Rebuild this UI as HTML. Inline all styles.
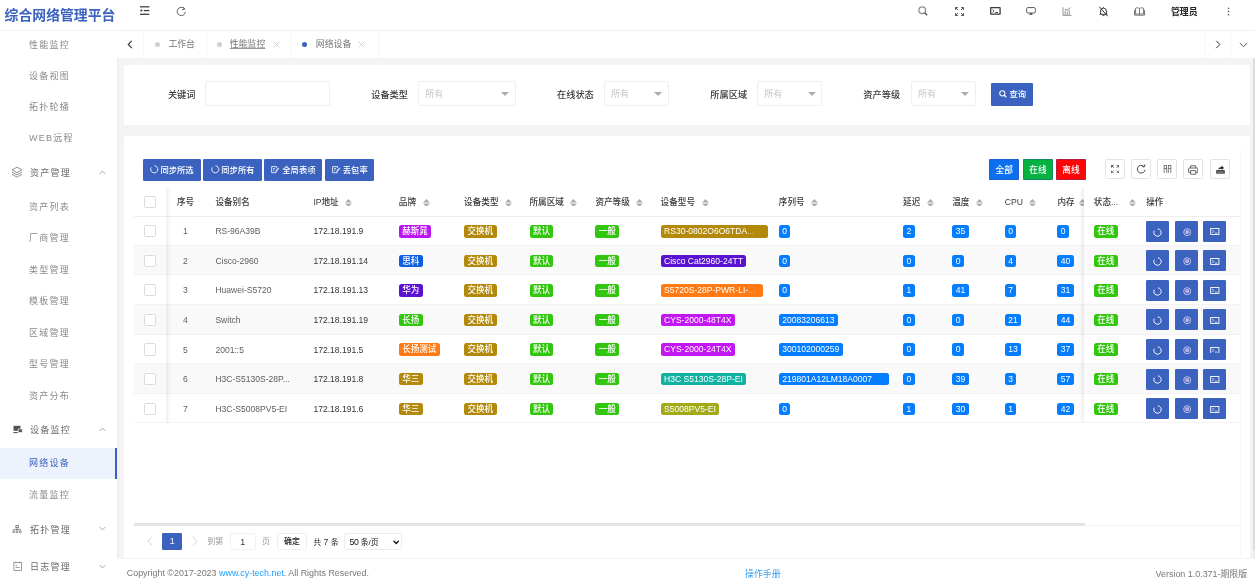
<!DOCTYPE html><html lang="zh-CN"><head><meta charset="utf-8"><title>综合网络管理平台</title><style>
*{box-sizing:border-box;margin:0;padding:0}
body{filter:blur(.45px)}
html,body{width:1255px;height:586px;overflow:hidden;background:#f4f4f4;font-family:"Liberation Sans","Noto Sans CJK SC",sans-serif;color:#333}
.abs{position:absolute}
#side{position:absolute;left:0;top:0;width:117.2px;height:586px;background:#fff;box-shadow:1px 0 2.5px rgba(0,0,0,.035)}
#logo{position:absolute;left:0;top:0;width:117.2px;height:30.7px;border-bottom:1px solid #f3f3f3;color:#3a62be;font-weight:bold;font-size:13.85px;line-height:30px;padding-left:4.6px;white-space:nowrap;letter-spacing:0}
.mi{position:absolute;left:0;width:117.2px;height:31px;line-height:31px;font-size:9px;letter-spacing:1.25px;color:#8a8a8a;padding-left:28.9px;white-space:nowrap}
.mi.g{padding-left:29.9px;color:#6a6a6a}
.mi.g span{position:relative}
.mi.act{background:#ecf3fd;color:#3a62be;border-right:2.4px solid #3a62be}
.mi svg{position:absolute}
#head{position:absolute;left:117.2px;top:0;width:1137.8px;height:30.8px;background:#fff;border-bottom:1px solid #f1f1f1}
#tabs{position:absolute;left:117.2px;top:30.5px;width:1137.8px;height:27.3px;background:#fff}
.sep{position:absolute;top:0;width:1px;height:27.3px;background:#f5f5f5}
.tab{position:absolute;top:0;height:27.3px;line-height:27.3px;font-size:8.9px;color:#777;white-space:nowrap}
.dot{position:absolute;top:11.2px;width:5px;height:5px;border-radius:50%;background:#d0d0d0}
.card{position:absolute;background:#fff;border-radius:1.5px}
.lab{position:absolute;top:0;height:24px;line-height:24px;font-size:9.2px;font-weight:500;color:#383838;text-align:right;white-space:nowrap}
.inp{position:absolute;height:24.6px;border:1px solid #efefef;border-radius:2px;background:#fff;font-size:9px;line-height:24.4px;color:#c6c6c6;padding-left:6.3px}
.inp i{position:absolute;right:5.6px;top:10px;width:0;height:0;border-left:4px solid transparent;border-right:4px solid transparent;border-top:4.2px solid #adadad}
.btn{position:absolute;background:#3a62be;color:#fff;font-size:8.3px;font-weight:500;white-space:nowrap;text-align:center;border-radius:1.3px}
.fb{top:158.9px;height:21.2px;line-height:22px;font-size:8.7px;box-shadow:inset 0 0 0 .7px rgba(58,70,170,.5)}
.th{position:absolute;font-size:8.6px;font-weight:500;color:#3a3a3a;white-space:nowrap;line-height:12px}
.row{position:absolute;left:133.6px;width:1106.4px;height:29.59px;border-bottom:1px solid #f2f2f2}
.row.z{background:#f9f9f9}
.td{position:absolute;font-size:8.55px;color:#5e5e5e;white-space:nowrap;line-height:12px}
.bd{position:absolute;height:12.6px;line-height:12.6px;border-radius:2.5px;color:#fff;font-size:8.55px;font-weight:500;padding:0 3.45px;white-space:nowrap;overflow:hidden}
.bd i{font-style:normal;opacity:.5}
.cb{position:absolute;left:143.5px;width:12.2px;height:12.2px;border:1px solid #dcdcdc;border-radius:1.6px;background:#fff}
.ab{position:absolute;width:23px;height:21px;background:#3a62be;border-radius:1.3px}
.tool{position:absolute;top:159.2px;width:19.5px;height:19.5px;border:1px solid #e4e4e4;border-radius:1.5px;background:#fff}
.pg{position:absolute;font-size:8px;white-space:nowrap}
#foot{position:absolute;left:117.2px;top:559.3px;width:1137.8px;height:26.7px;background:#fff;font-size:8.92px;color:#777}
#foot span{position:absolute;top:0;line-height:28.5px;white-space:nowrap}
</style></head><body>
<div id="side"><div id="logo">综合网络管理平台</div>
<div class="mi" style="top:29.8px">性能监控</div>
<div class="mi" style="top:60.8px">设备视图</div>
<div class="mi" style="top:91.8px">拓扑轮播</div>
<div class="mi" style="top:122.8px">WEB远程</div>
<div class="mi g" style="top:156.9px"><svg style="left:11.4px;top:9.3px" width="12" height="12" viewBox="0 0 12 12" fill="none" stroke="#888" stroke-width="0.9" stroke-linejoin="round"><path d="M6 1.2 L11 3.9 L6 6.6 L1 3.9 Z"/><path d="M1 6.2 L6 8.9 L11 6.2"/><path d="M1 8.4 L6 11.1 L11 8.4"/></svg><svg style="left:98.6px;top:13px" width="7" height="5" viewBox="0 0 7 5" fill="none" stroke="#999" stroke-width="0.85"><path d="M0.7 4 L3.5 1.1 L6.3 4"/></svg><span style="top:1.2px">资产管理</span></div>
<div class="mi" style="top:191.8px">资产列表</div>
<div class="mi" style="top:222.8px">厂商管理</div>
<div class="mi" style="top:254.8px">类型管理</div>
<div class="mi" style="top:285.8px">模板管理</div>
<div class="mi" style="top:317.8px">区域管理</div>
<div class="mi" style="top:348.8px">型号管理</div>
<div class="mi" style="top:380.8px">资产分布</div>
<div class="mi g" style="top:414.2px"><svg style="left:12.6px;top:10.7px" width="10" height="10" viewBox="0 0 10 10"><rect x="0.5" y="0.8" width="7" height="5" fill="#555"/><rect x="5.2" y="4" width="4" height="3.4" fill="#555" stroke="#fff" stroke-width=".6"/><rect x="0.5" y="7" width="4.2" height="1.1" fill="#555"/></svg><svg style="left:98.6px;top:13px" width="7" height="5" viewBox="0 0 7 5" fill="none" stroke="#999" stroke-width="0.85"><path d="M0.7 4 L3.5 1.1 L6.3 4"/></svg><span style="top:0.5px">设备监控</span></div>
<div class="mi act" style="top:447.7px">网络设备</div>
<div class="mi" style="top:479.8px">流量监控</div>
<div class="mi g" style="top:514.1px"><svg style="left:12.2px;top:11.2px" width="10.2" height="8.8" viewBox="0 0 11 10" fill="none" stroke="#666" stroke-width="0.85"><rect x="4.1" y="0.6" width="2.8" height="2.4"/><path d="M5.5 3 V5 M1.7 6.4 V5 H9.3 V6.4 M5.5 5 V6.4"/><circle cx="1.7" cy="7.7" r="1.15"/><circle cx="5.5" cy="7.7" r="1.15"/><circle cx="9.3" cy="7.7" r="1.15"/></svg><svg style="left:98.6px;top:12.4px" width="7" height="5" viewBox="0 0 7 5" fill="none" stroke="#999" stroke-width="0.85"><path d="M0.7 1 L3.5 3.9 L6.3 1"/></svg><span style="top:1.2px">拓扑管理</span></div>
<div class="mi g" style="top:550.9px"><svg style="left:12.8px;top:9.8px" width="10" height="10" viewBox="0 0 10 10" fill="none" stroke="#8e8e8e" stroke-width="0.85"><rect x="0.9" y="1.4" width="7.6" height="8"/><path d="M3 0.5 V2.4 M6.4 0.5 V2.4 M2.6 6.5 H6.8 M2.6 4.5 H4"/></svg><svg style="left:98.6px;top:13.0px" width="7" height="5" viewBox="0 0 7 5" fill="none" stroke="#999" stroke-width="0.85"><path d="M0.7 1 L3.5 3.9 L6.3 1"/></svg><span style="top:1.2px">日志管理</span></div>
</div>
<div id="head">
<svg class="abs" style="left:23px;top:6.1px" width="9.6" height="9.2" viewBox="0 0 10 9.6" fill="#3a3a3a"><rect x="0" y="0.2" width="9.8" height="1.3"/><rect x="4" y="4.1" width="5.8" height="1.3"/><rect x="0" y="8" width="9.8" height="1.3"/><path d="M0.6 3.2 L3 4.75 L0.6 6.3 Z"/></svg>
<svg class="abs" style="left:59px;top:6.2px" width="10.6" height="10.6" viewBox="0 0 10 10" fill="none" stroke="#555" stroke-width="0.9"><path d="M8.2 2.9 A3.9 3.9 0 1 0 8.9 5.6"/><path d="M6.3 0.9 L8.4 3 L5.7 3.5" stroke-width=".8"/></svg>
<svg class="abs" style="left:801.3px;top:6.4px" width="10" height="10" viewBox="0 0 10 10" fill="none" stroke="#8c8c8c" stroke-width="1.25"><circle cx="4.2" cy="4.2" r="3.3"/><path d="M6.7 6.7 L9.2 9.2" stroke="#555" stroke-width="1.4"/></svg>
<svg class="abs" style="left:837.6px;top:6.6px" width="9" height="9" viewBox="0 0 9 9" fill="none" stroke="#555" stroke-width="1"><path d="M0.5 2.8 V0.5 H2.8 M6.2 0.5 H8.5 V2.8 M8.5 6.2 V8.5 H6.2 M2.8 8.5 H0.5 V6.2 M0.7 0.7 L3 3 M8.3 0.7 L6 3 M8.3 8.3 L6 6 M0.7 8.3 L3 6"/></svg>
<svg class="abs" style="left:872.7px;top:7.2px" width="11" height="8" viewBox="0 0 11 8" fill="none" stroke="#3a3a3a" stroke-width="1.25"><rect x="0.7" y="0.7" width="9.4" height="6.4" rx=".15"/><path d="M2.5 2.4 L4.1 3.9 L2.5 5.4 M5.2 5.5 H8" stroke-width=".9"/></svg>
<svg class="abs" style="left:908.8px;top:7px" width="10.2" height="8.4" viewBox="0 0 11 9" fill="none" stroke="#555" stroke-width="1.05"><rect x="0.7" y="0.6" width="9.4" height="5.8" rx="1.2"/><path d="M3.6 8.4 H7.2 M4.4 8.2 L5.4 6.6 L6.4 8.2 Z" stroke-width="1" fill="#555"/></svg>
<svg class="abs" style="left:945.0px;top:7px" width="10" height="9" viewBox="0 0 10 9" fill="none" stroke="#888" stroke-width="0.9"><path d="M1 0.3 V8.4 H9.4 M3.2 8 V3.6 M5.2 8 V4.6 M7.2 8 V2.8 M2.8 2.2 L5 3.2 L8.4 0.6"/></svg>
<svg class="abs" style="left:980.7px;top:6px" width="11" height="11" viewBox="0 0 11 11" fill="none" stroke="#333" stroke-width="0.95"><path d="M2.6 8.2 V5 A2.9 2.9 0 0 1 8.4 5 V8.2 M1.6 8.3 H9.4 M4.5 9.6 H6.5 M5.5 1.2 V2.1"/><path d="M1.4 0.8 L9.6 10.2" stroke-width="1"/></svg>
<svg class="abs" style="left:1016.5px;top:7.2px" width="11" height="9" viewBox="0 0 11 9" fill="none" stroke="#666" stroke-width="0.9"><path d="M5.5 1.6 C4.4 0.6 2.6 0.6 1.6 1.2 V7.2 C2.8 6.7 4.4 6.8 5.5 7.6 C6.6 6.8 8.2 6.7 9.4 7.2 V1.2 C8.4 0.6 6.6 0.6 5.5 1.6 V7.6 M0.5 3 V8.2 H10.5 V3"/></svg>
<div class="abs" style="left:1053.8px;top:0;line-height:24.4px;font-size:8.9px;color:#222;font-weight:bold;white-space:nowrap;letter-spacing:0">管理员</div>
<svg class="abs" style="left:1110.3px;top:7px" width="3" height="9" viewBox="0 0 3 9" fill="#555"><circle cx="1.5" cy="1.2" r=".8"/><circle cx="1.5" cy="4.5" r=".8"/><circle cx="1.5" cy="7.8" r=".8"/></svg>
</div>
<div id="tabs">
<div class="sep" style="left:25.8px"></div>
<div class="sep" style="left:88.8px"></div>
<div class="sep" style="left:174.2px"></div>
<div class="sep" style="left:260.8px"></div>
<div class="sep" style="left:1087.0px"></div>
<div class="sep" style="left:1113.0px"></div>
<svg class="abs" style="left:9.8px;top:9.5px" width="6" height="9" viewBox="0 0 6 9" fill="none" stroke="#333" stroke-width="1.1"><path d="M4.8 0.8 L1.2 4.5 L4.8 8.2"/></svg>
<div class="dot" style="left:37.9px"></div><div class="tab" style="left:51.2px">工作台</div>
<div class="dot" style="left:99.4px"></div><div class="tab" style="left:112.6px;text-decoration:underline;text-decoration-color:#999;text-decoration-thickness:.6px;text-underline-offset:1px">性能监控</div>
<svg class="abs" style="left:155.7px;top:10.7px" width="7" height="7" viewBox="0 0 7 7" stroke="#c8c8c8" stroke-width=".8"><path d="M0.6 0.6 L6.4 6.4 M6.4 0.6 L0.6 6.4"/></svg>
<div class="dot" style="left:185.2px;background:#3a62be"></div><div class="tab" style="left:198.6px">网络设备</div>
<svg class="abs" style="left:241.3px;top:10.7px" width="7" height="7" viewBox="0 0 7 7" stroke="#c8c8c8" stroke-width=".8"><path d="M0.6 0.6 L6.4 6.4 M6.4 0.6 L0.6 6.4"/></svg>
<svg class="abs" style="left:1097.6px;top:9.8px" width="6" height="9" viewBox="0 0 6 9" fill="none" stroke="#333" stroke-width="1"><path d="M1.2 0.8 L4.8 4.5 L1.2 8.2"/></svg>
<svg class="abs" style="left:1122.0px;top:11.6px" width="9" height="6" viewBox="0 0 9 6" fill="none" stroke="#444" stroke-width=".9"><path d="M0.8 1 L4.5 4.6 L8.2 1"/></svg>
</div>
<div class="abs" style="left:1252.6px;top:57.8px;width:2.4px;height:501.5px;background:#ebebeb"></div>
<div class="abs" style="left:1252.6px;top:57.8px;width:2.4px;height:492.6px;background:#dddddd"></div>
<div class="card" style="left:123.6px;top:65px;width:1126.4px;height:60.2px">
<div class="lab" style="left:-8.1px;width:80px;top:17.5px">关键词</div>
<div class="inp" style="left:81.8px;top:16.2px;width:124.3px"></div>
<div class="lab" style="left:204.4px;width:80px;top:17.5px">设备类型</div>
<div class="inp" style="left:294.3px;top:16.2px;width:97.7px">所有<i></i></div>
<div class="lab" style="left:390.2px;width:80px;top:17.5px">在线状态</div>
<div class="inp" style="left:480.1px;top:16.2px;width:65.3px">所有<i></i></div>
<div class="lab" style="left:543.5px;width:80px;top:17.5px">所属区域</div>
<div class="inp" style="left:633.4px;top:16.2px;width:65.3px">所有<i></i></div>
<div class="lab" style="left:696.5px;width:80px;top:17.5px">资产等级</div>
<div class="inp" style="left:787.1px;top:16.2px;width:65.0px">所有<i></i></div>
<div class="btn" style="left:867.2px;top:18.0px;width:42.2px;height:22.9px;line-height:22.6px;text-align:left"><svg class="abs" style="left:8.3px;top:7.4px" width="8" height="8" viewBox="0 0 8 8" fill="none" stroke="#fff" stroke-width="1.05"><circle cx="3.3" cy="3.3" r="2.6"/><path d="M5.3 5.3 L7.4 7.4" stroke-width="1.25"/></svg><span style="position:absolute;left:18.6px">查询</span></div>
</div>
<div class="card" style="left:123.6px;top:136px;width:1126.4px;height:423.4px"></div>
<div class="btn" style="left:142.8px;top:158.6px;width:58.0px;height:22.2px;line-height:22.2px;text-align:left"><svg class="abs" style="left:7.6px;top:6.9px" width="8.6" height="8.6" viewBox="0 0 8 8" fill="none" stroke="#fff" stroke-width=".8"><path d="M4.2 0.7 A3.3 3.3 0 1 1 1.2 2.2"/></svg><span style="position:absolute;left:17.6px">同步所选</span></div>
<div class="btn" style="left:203.4px;top:158.6px;width:58.4px;height:22.2px;line-height:22.2px;text-align:left"><svg class="abs" style="left:7.6px;top:6.9px" width="8.6" height="8.6" viewBox="0 0 8 8" fill="none" stroke="#fff" stroke-width=".8"><path d="M4.2 0.7 A3.3 3.3 0 1 1 1.2 2.2"/></svg><span style="position:absolute;left:17.9px">同步所有</span></div>
<div class="btn" style="left:264.3px;top:158.6px;width:57.8px;height:22.2px;line-height:22.2px;text-align:left"><svg class="abs" style="left:7.2px;top:7.6px" width="8.4" height="7.4" viewBox="0 0 8.4 7.4" fill="none" stroke="#e4eaf8" stroke-width=".95"><path d="M5.6 6.7 H0.6 V0.6 H5.6 V2.2 M2 2.6 H4 M2 4.4 H3.2" /><path d="M4.4 6.2 L4.8 4.6 L7.4 1.8 L8 2.6 L5.6 5.6 Z" fill="#e4eaf8" stroke-width=".3"/></svg><span style="position:absolute;left:18.0px">全局表项</span></div>
<div class="btn" style="left:324.8px;top:158.6px;width:49.5px;height:22.2px;line-height:22.2px;text-align:left"><svg class="abs" style="left:7.4px;top:7.6px" width="8.4" height="7.4" viewBox="0 0 8.4 7.4" fill="none" stroke="#e4eaf8" stroke-width=".95"><path d="M5.6 6.7 H0.6 V0.6 H5.6 V2.2 M2 2.6 H4 M2 4.4 H3.2" /><path d="M4.4 6.2 L4.8 4.6 L7.4 1.8 L8 2.6 L5.6 5.6 Z" fill="#e4eaf8" stroke-width=".3"/></svg><span style="position:absolute;left:18.0px">丢包率</span></div>
<div class="btn fb" style="left:989px;width:30.4px;background:#0c70ee">全部</div>
<div class="btn fb" style="left:1022.8px;width:30.2px;background:#04b242">在线</div>
<div class="btn fb" style="left:1056.2px;width:29.7px;background:#ff0404">离线</div>
<div class="tool" style="left:1105.1px"><svg class="abs" style="left:4.6px;top:4.6px" width="8.4" height="8.4" viewBox="0 0 9 9" fill="none" stroke="#555" stroke-width="1"><path d="M0.5 2.8 V0.5 H2.8 M6.2 0.5 H8.5 V2.8 M8.5 6.2 V8.5 H6.2 M2.8 8.5 H0.5 V6.2 M0.7 0.7 L3 3 M8.3 0.7 L6 3 M8.3 8.3 L6 6 M0.7 8.3 L3 6"/></svg></div>
<div class="tool" style="left:1131.2px"><svg class="abs" style="left:3.6px;top:3.6px" width="10.5" height="10.5" viewBox="0 0 10 10" fill="none" stroke="#444" stroke-width="0.95"><path d="M8.6 5.6 A3.7 3.7 0 1 1 7.4 2.2"/><path d="M5.8 2.7 L8.2 2.6 L8.4 0.3" stroke-width=".9"/></svg></div>
<div class="tool" style="left:1157.3px"><svg class="abs" style="left:4.4px;top:5.2px" width="9" height="8.6" viewBox="0 0 9 10" fill="none" stroke="#666" stroke-width="0.95"><rect x="0.6" y="0.6" width="2.9" height="3.4"/><rect x="5.5" y="0.6" width="2.9" height="3.4"/><path d="M0.6 4 V9.2 M3.5 4 V9.2 M5.5 4 V9.2 M8.4 4 V9.2"/></svg></div>
<div class="tool" style="left:1183.3px"><svg class="abs" style="left:3.7px;top:4.9px" width="10.4" height="10" viewBox="0 0 10.4 10" fill="none" stroke="#555" stroke-width="0.9"><path d="M2.6 3 V0.8 H7.8 V3 M2.6 7.4 H1 A.5 .5 0 0 1 .6 7 V3.6 A.6 .6 0 0 1 1.2 3 H9.2 A.6 .6 0 0 1 9.8 3.6 V7 A.5 .5 0 0 1 9.4 7.4 H7.8 M2.6 5.6 H7.8 V9.2 H2.6 Z"/></svg></div>
<div class="tool" style="left:1210.0px"><svg class="abs" style="left:4.6px;top:4.4px" width="9" height="9" viewBox="0 0 9 9" fill="#222"><path d="M0.3 5.2 H8.7 V8.6 H0.3 Z"/><path d="M2.2 4.6 C2.6 2.8 4 2 5.6 2 V0.6 L8 2.9 L5.6 5 V3.7 C4.4 3.6 3.2 3.8 2.2 4.6 Z"/><rect x="1.2" y="6.7" width="6.6" height=".7" fill="#fff"/></svg></div>
<div class="abs" style="left:133.6px;top:186.7px;width:1106.4px;height:30.3px;border-bottom:1px solid #eee"></div>
<div class="cb" style="top:196.3px"></div>
<div class="th" style="left:177.0px;top:195.9px">序号</div>
<div class="th" style="left:215.4px;top:195.9px">设备别名</div>
<div class="th" style="left:313.4px;top:195.9px">IP地址</div>
<svg class="abs" style="left:344.75px;top:198.55px" width="6.9" height="7.9" viewBox="0 0 6.9 7.9" fill="#adadad"><path d="M0 3.4 L3.45 0 L6.9 3.4 Z M0 4.5 L3.45 7.9 L6.9 4.5 Z"/></svg>
<div class="th" style="left:398.8px;top:195.9px">品牌</div>
<svg class="abs" style="left:422.65px;top:198.55px" width="6.9" height="7.9" viewBox="0 0 6.9 7.9" fill="#adadad"><path d="M0 3.4 L3.45 0 L6.9 3.4 Z M0 4.5 L3.45 7.9 L6.9 4.5 Z"/></svg>
<div class="th" style="left:464.1px;top:195.9px">设备类型</div>
<svg class="abs" style="left:504.65px;top:198.55px" width="6.9" height="7.9" viewBox="0 0 6.9 7.9" fill="#adadad"><path d="M0 3.4 L3.45 0 L6.9 3.4 Z M0 4.5 L3.45 7.9 L6.9 4.5 Z"/></svg>
<div class="th" style="left:529.5px;top:195.9px">所属区域</div>
<svg class="abs" style="left:570.45px;top:198.55px" width="6.9" height="7.9" viewBox="0 0 6.9 7.9" fill="#adadad"><path d="M0 3.4 L3.45 0 L6.9 3.4 Z M0 4.5 L3.45 7.9 L6.9 4.5 Z"/></svg>
<div class="th" style="left:595.4px;top:195.9px">资产等级</div>
<svg class="abs" style="left:636.05px;top:198.55px" width="6.9" height="7.9" viewBox="0 0 6.9 7.9" fill="#adadad"><path d="M0 3.4 L3.45 0 L6.9 3.4 Z M0 4.5 L3.45 7.9 L6.9 4.5 Z"/></svg>
<div class="th" style="left:660.6px;top:195.9px">设备型号</div>
<svg class="abs" style="left:701.65px;top:198.55px" width="6.9" height="7.9" viewBox="0 0 6.9 7.9" fill="#adadad"><path d="M0 3.4 L3.45 0 L6.9 3.4 Z M0 4.5 L3.45 7.9 L6.9 4.5 Z"/></svg>
<div class="th" style="left:778.8px;top:195.9px">序列号</div>
<svg class="abs" style="left:810.75px;top:198.55px" width="6.9" height="7.9" viewBox="0 0 6.9 7.9" fill="#adadad"><path d="M0 3.4 L3.45 0 L6.9 3.4 Z M0 4.5 L3.45 7.9 L6.9 4.5 Z"/></svg>
<div class="th" style="left:903.1px;top:195.9px">延迟</div>
<svg class="abs" style="left:926.75px;top:198.55px" width="6.9" height="7.9" viewBox="0 0 6.9 7.9" fill="#adadad"><path d="M0 3.4 L3.45 0 L6.9 3.4 Z M0 4.5 L3.45 7.9 L6.9 4.5 Z"/></svg>
<div class="th" style="left:952.2px;top:195.9px">温度</div>
<svg class="abs" style="left:975.85px;top:198.55px" width="6.9" height="7.9" viewBox="0 0 6.9 7.9" fill="#adadad"><path d="M0 3.4 L3.45 0 L6.9 3.4 Z M0 4.5 L3.45 7.9 L6.9 4.5 Z"/></svg>
<div class="th" style="left:1004.8px;top:195.9px">CPU</div>
<svg class="abs" style="left:1029.05px;top:198.55px" width="6.9" height="7.9" viewBox="0 0 6.9 7.9" fill="#adadad"><path d="M0 3.4 L3.45 0 L6.9 3.4 Z M0 4.5 L3.45 7.9 L6.9 4.5 Z"/></svg>
<div class="th" style="left:1057.4px;top:195.9px">内存</div>
<svg class="abs" style="left:1079.15px;top:198.55px" width="6.9" height="7.9" viewBox="0 0 6.9 7.9" fill="#adadad"><path d="M0 3.4 L3.45 0 L6.9 3.4 Z M0 4.5 L3.45 7.9 L6.9 4.5 Z"/></svg>
<div class="row" style="top:216.28px"></div>
<div class="cb" style="top:225.1px"></div>
<div class="td" style="left:175.5px;width:20px;text-align:center;top:225.2px">1</div>
<div class="td" style="left:215.4px;top:225.2px">RS-96A39B</div>
<div class="td" style="left:313.4px;top:225.2px;color:#333">172.18.191.9</div>
<div class="bd" style="left:398.7px;top:225.0px;background:#ba16ee">赫斯晁</div>
<div class="bd" style="left:464.1px;top:225.0px;background:#b3890b">交换机</div>
<div class="bd" style="left:529.5px;top:225.0px;background:#32c60e">默认</div>
<div class="bd" style="left:595.4px;top:225.0px;background:#32c60e">一般</div>
<div class="bd" style="left:660.6px;top:225.0px;background:#b3890b;width:107.8px">RS30-0802O6O6TDA<i>...</i></div>
<div class="bd" style="left:778.8px;top:225.0px;background:#047dfe">0</div>
<div class="bd" style="left:903.1px;top:225.0px;background:#047dfe">2</div>
<div class="bd" style="left:952.2px;top:225.0px;background:#047dfe">35</div>
<div class="bd" style="left:1004.8px;top:225.0px;background:#047dfe">0</div>
<div class="bd" style="left:1057.4px;top:225.0px;background:#047dfe">0</div>
<div class="row z" style="top:245.87px"></div>
<div class="cb" style="top:254.7px"></div>
<div class="td" style="left:175.5px;width:20px;text-align:center;top:254.8px">2</div>
<div class="td" style="left:215.4px;top:254.8px">Cisco-2960</div>
<div class="td" style="left:313.4px;top:254.8px;color:#333">172.18.191.14</div>
<div class="bd" style="left:398.7px;top:254.6px;background:#0d5fe0">思科</div>
<div class="bd" style="left:464.1px;top:254.6px;background:#b3890b">交换机</div>
<div class="bd" style="left:529.5px;top:254.6px;background:#32c60e">默认</div>
<div class="bd" style="left:595.4px;top:254.6px;background:#32c60e">一般</div>
<div class="bd" style="left:660.6px;top:254.6px;background:#5a12d2">Cisco Cat2960-24TT</div>
<div class="bd" style="left:778.8px;top:254.6px;background:#047dfe">0</div>
<div class="bd" style="left:903.1px;top:254.6px;background:#047dfe">0</div>
<div class="bd" style="left:952.2px;top:254.6px;background:#047dfe">0</div>
<div class="bd" style="left:1004.8px;top:254.6px;background:#047dfe">4</div>
<div class="bd" style="left:1057.4px;top:254.6px;background:#047dfe">40</div>
<div class="row" style="top:275.46px"></div>
<div class="cb" style="top:284.3px"></div>
<div class="td" style="left:175.5px;width:20px;text-align:center;top:284.4px">3</div>
<div class="td" style="left:215.4px;top:284.4px">Huawei-S5720</div>
<div class="td" style="left:313.4px;top:284.4px;color:#333">172.18.191.13</div>
<div class="bd" style="left:398.7px;top:284.2px;background:#5a12d2">华为</div>
<div class="bd" style="left:464.1px;top:284.2px;background:#b3890b">交换机</div>
<div class="bd" style="left:529.5px;top:284.2px;background:#32c60e">默认</div>
<div class="bd" style="left:595.4px;top:284.2px;background:#32c60e">一般</div>
<div class="bd" style="left:660.6px;top:284.2px;background:#ff7a12;width:102.4px">S5720S-28P-PWR-LI-<i>...</i></div>
<div class="bd" style="left:778.8px;top:284.2px;background:#047dfe">0</div>
<div class="bd" style="left:903.1px;top:284.2px;background:#047dfe">1</div>
<div class="bd" style="left:952.2px;top:284.2px;background:#047dfe">41</div>
<div class="bd" style="left:1004.8px;top:284.2px;background:#047dfe">7</div>
<div class="bd" style="left:1057.4px;top:284.2px;background:#047dfe">31</div>
<div class="row z" style="top:305.05px"></div>
<div class="cb" style="top:313.8px"></div>
<div class="td" style="left:175.5px;width:20px;text-align:center;top:313.9px">4</div>
<div class="td" style="left:215.4px;top:313.9px">Switch</div>
<div class="td" style="left:313.4px;top:313.9px;color:#333">172.18.191.19</div>
<div class="bd" style="left:398.7px;top:313.7px;background:#32c60e">长扬</div>
<div class="bd" style="left:464.1px;top:313.7px;background:#b3890b">交换机</div>
<div class="bd" style="left:529.5px;top:313.7px;background:#32c60e">默认</div>
<div class="bd" style="left:595.4px;top:313.7px;background:#32c60e">一般</div>
<div class="bd" style="left:660.6px;top:313.7px;background:#c216f2">CYS-2000-48T4X</div>
<div class="bd" style="left:778.8px;top:313.7px;background:#047dfe">20083206613</div>
<div class="bd" style="left:903.1px;top:313.7px;background:#047dfe">0</div>
<div class="bd" style="left:952.2px;top:313.7px;background:#047dfe">0</div>
<div class="bd" style="left:1004.8px;top:313.7px;background:#047dfe">21</div>
<div class="bd" style="left:1057.4px;top:313.7px;background:#047dfe">44</div>
<div class="row" style="top:334.64px"></div>
<div class="cb" style="top:343.4px"></div>
<div class="td" style="left:175.5px;width:20px;text-align:center;top:343.5px">5</div>
<div class="td" style="left:215.4px;top:343.5px">2001::5</div>
<div class="td" style="left:313.4px;top:343.5px;color:#333">172.18.191.5</div>
<div class="bd" style="left:398.7px;top:343.3px;background:#ff7a12">长扬测试</div>
<div class="bd" style="left:464.1px;top:343.3px;background:#b3890b">交换机</div>
<div class="bd" style="left:529.5px;top:343.3px;background:#32c60e">默认</div>
<div class="bd" style="left:595.4px;top:343.3px;background:#32c60e">一般</div>
<div class="bd" style="left:660.6px;top:343.3px;background:#c216f2">CYS-2000-24T4X</div>
<div class="bd" style="left:778.8px;top:343.3px;background:#047dfe">300102000259</div>
<div class="bd" style="left:903.1px;top:343.3px;background:#047dfe">0</div>
<div class="bd" style="left:952.2px;top:343.3px;background:#047dfe">0</div>
<div class="bd" style="left:1004.8px;top:343.3px;background:#047dfe">13</div>
<div class="bd" style="left:1057.4px;top:343.3px;background:#047dfe">37</div>
<div class="row z" style="top:364.23px"></div>
<div class="cb" style="top:373.0px"></div>
<div class="td" style="left:175.5px;width:20px;text-align:center;top:373.1px">6</div>
<div class="td" style="left:215.4px;top:373.1px">H3C-S5130S-28P...</div>
<div class="td" style="left:313.4px;top:373.1px;color:#333">172.18.191.8</div>
<div class="bd" style="left:398.7px;top:372.9px;background:#b3890b">华三</div>
<div class="bd" style="left:464.1px;top:372.9px;background:#b3890b">交换机</div>
<div class="bd" style="left:529.5px;top:372.9px;background:#32c60e">默认</div>
<div class="bd" style="left:595.4px;top:372.9px;background:#32c60e">一般</div>
<div class="bd" style="left:660.6px;top:372.9px;background:#12b2a2">H3C S5130S-28P-EI</div>
<div class="bd" style="left:778.8px;top:372.9px;background:#047dfe;width:110.2px">219801A12LM18A0007</div>
<div class="bd" style="left:903.1px;top:372.9px;background:#047dfe">0</div>
<div class="bd" style="left:952.2px;top:372.9px;background:#047dfe">39</div>
<div class="bd" style="left:1004.8px;top:372.9px;background:#047dfe">3</div>
<div class="bd" style="left:1057.4px;top:372.9px;background:#047dfe">57</div>
<div class="row" style="top:393.82px"></div>
<div class="cb" style="top:402.6px"></div>
<div class="td" style="left:175.5px;width:20px;text-align:center;top:402.7px">7</div>
<div class="td" style="left:215.4px;top:402.7px">H3C-S5008PV5-EI</div>
<div class="td" style="left:313.4px;top:402.7px;color:#333">172.18.191.6</div>
<div class="bd" style="left:398.7px;top:402.5px;background:#b3890b">华三</div>
<div class="bd" style="left:464.1px;top:402.5px;background:#b3890b">交换机</div>
<div class="bd" style="left:529.5px;top:402.5px;background:#32c60e">默认</div>
<div class="bd" style="left:595.4px;top:402.5px;background:#32c60e">一般</div>
<div class="bd" style="left:660.6px;top:402.5px;background:#a2aa18">S5008PV5-EI</div>
<div class="bd" style="left:778.8px;top:402.5px;background:#047dfe">0</div>
<div class="bd" style="left:903.1px;top:402.5px;background:#047dfe">1</div>
<div class="bd" style="left:952.2px;top:402.5px;background:#047dfe">30</div>
<div class="bd" style="left:1004.8px;top:402.5px;background:#047dfe">1</div>
<div class="bd" style="left:1057.4px;top:402.5px;background:#047dfe">42</div>
<div class="abs" style="left:1084px;top:187px;width:156px;height:236px;background:#fff;box-shadow:-2px 0 4px rgba(0,0,0,.08);clip-path:inset(0 0 0 -8px)"></div>
<div class="abs" style="left:1084px;top:186.7px;width:156px;height:30.3px;border-bottom:1px solid #eee"></div>
<div class="th" style="left:1093.8px;top:195.9px">状态...</div>
<svg class="abs" style="left:1129.05px;top:198.55px" width="6.9" height="7.9" viewBox="0 0 6.9 7.9" fill="#adadad"><path d="M0 3.4 L3.45 0 L6.9 3.4 Z M0 4.5 L3.45 7.9 L6.9 4.5 Z"/></svg>
<div class="th" style="left:1146.2px;top:195.9px">操作</div>
<div class="abs" style="left:1084px;top:216.28px;width:156px;height:29.59px;border-bottom:1px solid #f2f2f2;"></div>
<div class="bd" style="left:1093.8px;top:225.0px;background:#32c60e">在线</div>
<div class="ab" style="left:1146.2px;top:220.7px"><svg class="abs" style="left:7.3px;top:6.9px" width="9" height="9" viewBox="0 0 9 9" fill="none" stroke="#f4f6fc" stroke-width="1"><path d="M4.8 0.82 A3.7 3.7 0 1 1 1.3 2.65"/></svg></div>
<div class="ab" style="left:1175.1px;top:220.7px"><svg class="abs" style="left:7.5px;top:7px" width="8.4" height="8.4" viewBox="0 0 8.4 8.4" fill="none" stroke="#cfcdf3" stroke-width=".9"><circle cx="4.2" cy="4.2" r="3.5"/><circle cx="4.2" cy="4.2" r="2.1" fill="#b5b0e6" stroke="none"/></svg></div>
<div class="ab" style="left:1203.2px;top:220.7px"><svg class="abs" style="left:7px;top:7.6px" width="9.6" height="6.9" viewBox="0 0 9.6 7.2" fill="none" stroke="#fff" stroke-width=".95"><rect x="0.5" y="0.5" width="8.6" height="6.2"/><path d="M2.2 2 L3.8 3.6 L2.2 5.2 M5 5.3 H7.6" stroke-width=".8"/></svg></div>
<div class="abs" style="left:1084px;top:245.87px;width:156px;height:29.59px;border-bottom:1px solid #f2f2f2;background:#f9f9f9"></div>
<div class="bd" style="left:1093.8px;top:254.6px;background:#32c60e">在线</div>
<div class="ab" style="left:1146.2px;top:250.3px"><svg class="abs" style="left:7.3px;top:6.9px" width="9" height="9" viewBox="0 0 9 9" fill="none" stroke="#f4f6fc" stroke-width="1"><path d="M4.8 0.82 A3.7 3.7 0 1 1 1.3 2.65"/></svg></div>
<div class="ab" style="left:1175.1px;top:250.3px"><svg class="abs" style="left:7.5px;top:7px" width="8.4" height="8.4" viewBox="0 0 8.4 8.4" fill="none" stroke="#cfcdf3" stroke-width=".9"><circle cx="4.2" cy="4.2" r="3.5"/><circle cx="4.2" cy="4.2" r="2.1" fill="#b5b0e6" stroke="none"/></svg></div>
<div class="ab" style="left:1203.2px;top:250.3px"><svg class="abs" style="left:7px;top:7.6px" width="9.6" height="6.9" viewBox="0 0 9.6 7.2" fill="none" stroke="#fff" stroke-width=".95"><rect x="0.5" y="0.5" width="8.6" height="6.2"/><path d="M2.2 2 L3.8 3.6 L2.2 5.2 M5 5.3 H7.6" stroke-width=".8"/></svg></div>
<div class="abs" style="left:1084px;top:275.46px;width:156px;height:29.59px;border-bottom:1px solid #f2f2f2;"></div>
<div class="bd" style="left:1093.8px;top:284.2px;background:#32c60e">在线</div>
<div class="ab" style="left:1146.2px;top:279.9px"><svg class="abs" style="left:7.3px;top:6.9px" width="9" height="9" viewBox="0 0 9 9" fill="none" stroke="#f4f6fc" stroke-width="1"><path d="M4.8 0.82 A3.7 3.7 0 1 1 1.3 2.65"/></svg></div>
<div class="ab" style="left:1175.1px;top:279.9px"><svg class="abs" style="left:7.5px;top:7px" width="8.4" height="8.4" viewBox="0 0 8.4 8.4" fill="none" stroke="#cfcdf3" stroke-width=".9"><circle cx="4.2" cy="4.2" r="3.5"/><circle cx="4.2" cy="4.2" r="2.1" fill="#b5b0e6" stroke="none"/></svg></div>
<div class="ab" style="left:1203.2px;top:279.9px"><svg class="abs" style="left:7px;top:7.6px" width="9.6" height="6.9" viewBox="0 0 9.6 7.2" fill="none" stroke="#fff" stroke-width=".95"><rect x="0.5" y="0.5" width="8.6" height="6.2"/><path d="M2.2 2 L3.8 3.6 L2.2 5.2 M5 5.3 H7.6" stroke-width=".8"/></svg></div>
<div class="abs" style="left:1084px;top:305.05px;width:156px;height:29.59px;border-bottom:1px solid #f2f2f2;background:#f9f9f9"></div>
<div class="bd" style="left:1093.8px;top:313.7px;background:#32c60e">在线</div>
<div class="ab" style="left:1146.2px;top:309.4px"><svg class="abs" style="left:7.3px;top:6.9px" width="9" height="9" viewBox="0 0 9 9" fill="none" stroke="#f4f6fc" stroke-width="1"><path d="M4.8 0.82 A3.7 3.7 0 1 1 1.3 2.65"/></svg></div>
<div class="ab" style="left:1175.1px;top:309.4px"><svg class="abs" style="left:7.5px;top:7px" width="8.4" height="8.4" viewBox="0 0 8.4 8.4" fill="none" stroke="#cfcdf3" stroke-width=".9"><circle cx="4.2" cy="4.2" r="3.5"/><circle cx="4.2" cy="4.2" r="2.1" fill="#b5b0e6" stroke="none"/></svg></div>
<div class="ab" style="left:1203.2px;top:309.4px"><svg class="abs" style="left:7px;top:7.6px" width="9.6" height="6.9" viewBox="0 0 9.6 7.2" fill="none" stroke="#fff" stroke-width=".95"><rect x="0.5" y="0.5" width="8.6" height="6.2"/><path d="M2.2 2 L3.8 3.6 L2.2 5.2 M5 5.3 H7.6" stroke-width=".8"/></svg></div>
<div class="abs" style="left:1084px;top:334.64px;width:156px;height:29.59px;border-bottom:1px solid #f2f2f2;"></div>
<div class="bd" style="left:1093.8px;top:343.3px;background:#32c60e">在线</div>
<div class="ab" style="left:1146.2px;top:339.0px"><svg class="abs" style="left:7.3px;top:6.9px" width="9" height="9" viewBox="0 0 9 9" fill="none" stroke="#f4f6fc" stroke-width="1"><path d="M4.8 0.82 A3.7 3.7 0 1 1 1.3 2.65"/></svg></div>
<div class="ab" style="left:1175.1px;top:339.0px"><svg class="abs" style="left:7.5px;top:7px" width="8.4" height="8.4" viewBox="0 0 8.4 8.4" fill="none" stroke="#cfcdf3" stroke-width=".9"><circle cx="4.2" cy="4.2" r="3.5"/><circle cx="4.2" cy="4.2" r="2.1" fill="#b5b0e6" stroke="none"/></svg></div>
<div class="ab" style="left:1203.2px;top:339.0px"><svg class="abs" style="left:7px;top:7.6px" width="9.6" height="6.9" viewBox="0 0 9.6 7.2" fill="none" stroke="#fff" stroke-width=".95"><rect x="0.5" y="0.5" width="8.6" height="6.2"/><path d="M2.2 2 L3.8 3.6 L2.2 5.2 M5 5.3 H7.6" stroke-width=".8"/></svg></div>
<div class="abs" style="left:1084px;top:364.23px;width:156px;height:29.59px;border-bottom:1px solid #f2f2f2;background:#f9f9f9"></div>
<div class="bd" style="left:1093.8px;top:372.9px;background:#32c60e">在线</div>
<div class="ab" style="left:1146.2px;top:368.6px"><svg class="abs" style="left:7.3px;top:6.9px" width="9" height="9" viewBox="0 0 9 9" fill="none" stroke="#f4f6fc" stroke-width="1"><path d="M4.8 0.82 A3.7 3.7 0 1 1 1.3 2.65"/></svg></div>
<div class="ab" style="left:1175.1px;top:368.6px"><svg class="abs" style="left:7.5px;top:7px" width="8.4" height="8.4" viewBox="0 0 8.4 8.4" fill="none" stroke="#cfcdf3" stroke-width=".9"><circle cx="4.2" cy="4.2" r="3.5"/><circle cx="4.2" cy="4.2" r="2.1" fill="#b5b0e6" stroke="none"/></svg></div>
<div class="ab" style="left:1203.2px;top:368.6px"><svg class="abs" style="left:7px;top:7.6px" width="9.6" height="6.9" viewBox="0 0 9.6 7.2" fill="none" stroke="#fff" stroke-width=".95"><rect x="0.5" y="0.5" width="8.6" height="6.2"/><path d="M2.2 2 L3.8 3.6 L2.2 5.2 M5 5.3 H7.6" stroke-width=".8"/></svg></div>
<div class="abs" style="left:1084px;top:393.82px;width:156px;height:29.59px;border-bottom:1px solid #f2f2f2;"></div>
<div class="bd" style="left:1093.8px;top:402.5px;background:#32c60e">在线</div>
<div class="ab" style="left:1146.2px;top:398.2px"><svg class="abs" style="left:7.3px;top:6.9px" width="9" height="9" viewBox="0 0 9 9" fill="none" stroke="#f4f6fc" stroke-width="1"><path d="M4.8 0.82 A3.7 3.7 0 1 1 1.3 2.65"/></svg></div>
<div class="ab" style="left:1175.1px;top:398.2px"><svg class="abs" style="left:7.5px;top:7px" width="8.4" height="8.4" viewBox="0 0 8.4 8.4" fill="none" stroke="#cfcdf3" stroke-width=".9"><circle cx="4.2" cy="4.2" r="3.5"/><circle cx="4.2" cy="4.2" r="2.1" fill="#b5b0e6" stroke="none"/></svg></div>
<div class="ab" style="left:1203.2px;top:398.2px"><svg class="abs" style="left:7px;top:7.6px" width="9.6" height="6.9" viewBox="0 0 9.6 7.2" fill="none" stroke="#fff" stroke-width=".95"><rect x="0.5" y="0.5" width="8.6" height="6.2"/><path d="M2.2 2 L3.8 3.6 L2.2 5.2 M5 5.3 H7.6" stroke-width=".8"/></svg></div>
<div class="abs" style="left:133.6px;top:187px;width:32.8px;height:236px;box-shadow:2px 0 4px rgba(0,0,0,.08);clip-path:inset(0 -8px 0 0)"></div>
<div class="abs" style="left:1240px;top:150px;width:1px;height:405px;background:#f5f5f5"></div>
<div class="abs" style="left:133.6px;top:525px;width:1106.4px;height:1px;background:#f3f3f3"></div>
<div class="abs" style="left:133.6px;top:522.6px;width:951.4px;height:3px;background:#e4e4e4"></div>
<svg class="abs" style="left:146.8px;top:536.4px" width="6" height="10" viewBox="0 0 6 10" fill="none" stroke="#cfcfcf" stroke-width=".9"><path d="M5.2 0.6 L0.9 5 L5.2 9.4"/></svg>
<div class="abs" style="left:162.1px;top:533.4px;width:20.4px;height:16.5px;background:#3a62be;border-radius:1.3px;color:#fff;font-size:8.8px;text-align:center;line-height:16.9px">1</div>
<svg class="abs" style="left:191.6px;top:536.4px" width="6" height="10" viewBox="0 0 6 10" fill="none" stroke="#cfcfcf" stroke-width=".9"><path d="M0.8 0.6 L5.1 5 L0.8 9.4"/></svg>
<div class="pg" style="left:207.2px;top:535.6px;line-height:12px;color:#999">到第</div>
<div class="pg" style="left:229.6px;top:533.4px;width:26.2px;height:17px;border:1px solid #f0f0f0;border-radius:1.3px;text-align:center;line-height:16.4px;color:#333;font-size:8.8px">1</div>
<div class="pg" style="left:262px;top:535.6px;line-height:12px;color:#999">页</div>
<div class="pg" style="left:277.2px;top:533.4px;width:29.6px;height:17px;border:1px solid #eee;border-radius:1.3px;text-align:center;line-height:16px;color:#222;font-size:7.9px;font-weight:500">确定</div>
<div class="pg" style="left:313.3px;top:535.6px;line-height:12px;color:#333">共 <span style="font-size:8.8px">7</span> 条</div>
<div class="pg" style="left:344.4px;top:533.4px;width:57.3px;height:17px;border:1px solid #eee;border-radius:1.3px;line-height:16px;color:#111;font-size:7.9px;padding-left:4.2px"><span style="font-size:8.8px;letter-spacing:-.45px">50</span> 条/页<svg class="abs" style="left:47.4px;top:5.6px" width="6.4" height="4.6" viewBox="0 0 6.4 4.6" fill="none" stroke="#111" stroke-width="1.3"><path d="M0.6 0.8 L3.2 3.5 L5.8 0.8"/></svg></div>
<div class="abs" style="left:117.2px;top:558.4px;width:1137.8px;height:1px;background:#f4f4f4"></div>
<div id="foot"><span style="left:9.6px">Copyright ©2017-2023 <b style="font-weight:normal;color:#1e9fff">www.cy-tech.net</b>. All Rights Reserved.</span><span style="left:627.8px;top:1px;color:#3aa0f5">操作手册</span><span style="right:7.8px;top:.6px">Version 1.0.371-期限版</span></div>
</body></html>
